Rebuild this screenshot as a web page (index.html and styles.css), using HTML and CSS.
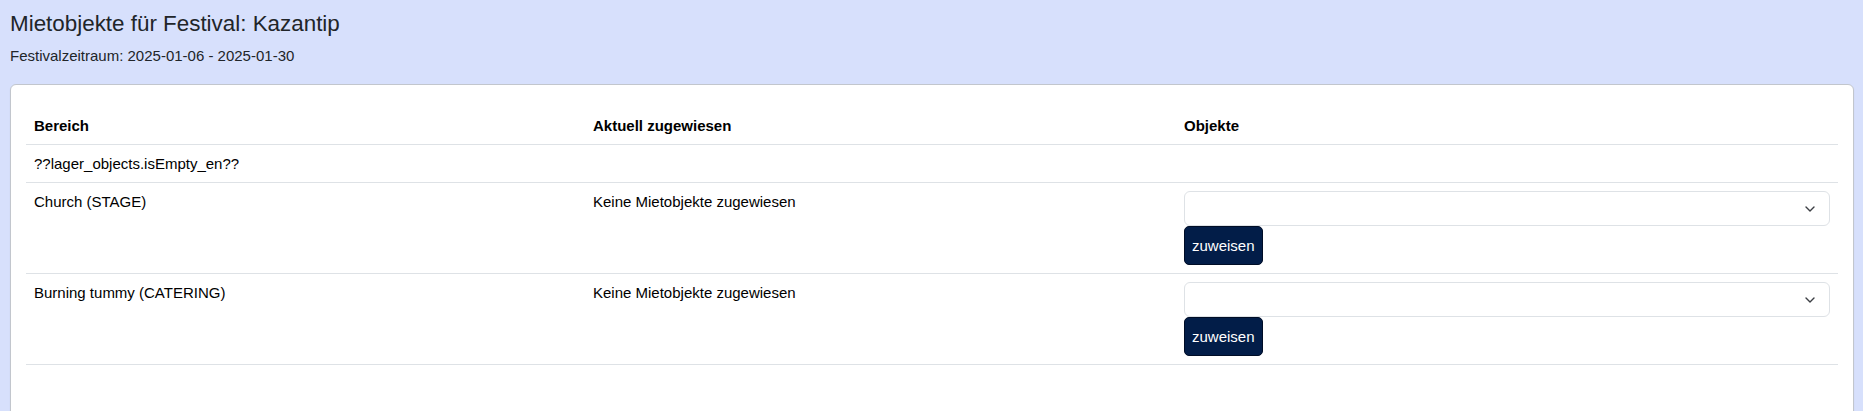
FILE: index.html
```html
<!DOCTYPE html>
<html lang="de">
<head>
<meta charset="utf-8">
<title>Mietobjekte für Festival: Kazantip</title>
<link rel="stylesheet" href="styles.css">
</head>
<body class="page">
  <header class="page-head">
    <h1 class="title">Mietobjekte für Festival: Kazantip</h1>
    <p class="period">Festivalzeitraum: 2025-01-06 - 2025-01-30</p>
  </header>
  <section class="card">
    <table class="tbl">
      <colgroup>
        <col class="col-area">
        <col class="col-current">
        <col class="col-objects">
      </colgroup>
      <thead>
        <tr>
          <th>Bereich</th>
          <th>Aktuell zugewiesen</th>
          <th>Objekte</th>
        </tr>
      </thead>
      <tbody>
        <tr>
          <td colspan="3">??lager_objects.isEmpty_en??</td>
        </tr>
        <tr>
          <td>Church (STAGE)</td>
          <td>Keine Mietobjekte zugewiesen</td>
          <td>
            <form class="assign">
              <div class="select">
                <span class="select-value"></span>
                <svg class="chev" viewBox="0 0 10 6" width="10" height="6"><path d="M1 1l4 4 4-4" fill="none" stroke="#3c3f44" stroke-width="1.4" stroke-linecap="round" stroke-linejoin="round"/></svg>
              </div>
              <button type="button" class="btn">zuweisen</button>
            </form>
          </td>
        </tr>
        <tr>
          <td>Burning tummy (CATERING)</td>
          <td>Keine Mietobjekte zugewiesen</td>
          <td>
            <form class="assign">
              <div class="select">
                <span class="select-value"></span>
                <svg class="chev" viewBox="0 0 10 6" width="10" height="6"><path d="M1 1l4 4 4-4" fill="none" stroke="#3c3f44" stroke-width="1.4" stroke-linecap="round" stroke-linejoin="round"/></svg>
              </div>
              <button type="button" class="btn">zuweisen</button>
            </form>
          </td>
        </tr>
      </tbody>
    </table>
  </section>
</body>
</html>
```
FILE: styles.css
```css
* { box-sizing: border-box; }

html, body { height: 100%; }

.page {
  margin: 0;
  padding: 0 9px 0 10px;
  background: #d7e0fc;
  font-family: "Liberation Sans", Arial, sans-serif;
  color: #000;
  overflow: hidden;
}

.page-head { padding-top: 11px; }

.title {
  margin: 0;
  font-size: 22.4px;
  line-height: 1.2;
  font-weight: 400;
  color: #212529;
}

.period {
  margin: 7px 0 0;
  font-size: 15px;
  line-height: 21px;
  color: #212529;
}

.card {
  margin-top: 18px;
  background: #fff;
  border: 1px solid #c2c6cd;
  border-radius: 6px;
  padding: 22px 15px 80px;
  box-shadow: 0 1px 2px rgba(0,0,0,0.06);
}

.tbl {
  width: 100%;
  border-collapse: collapse;
  table-layout: fixed;
  font-size: 15px;
  line-height: 21px;
}

.col-area { width: 559px; }
.col-current { width: 591px; }

.tbl th,
.tbl td {
  padding: 8px;
  text-align: left;
  vertical-align: top;
  border-bottom: 1px solid #dee2e6;
}

.tbl th { font-weight: 700; }

.assign {
  display: flex;
  flex-direction: column;
  align-items: flex-start;
  margin: 0;
}

.select {
  width: 100%;
  height: 35px;
  border: 1px solid #dee2e6;
  border-radius: 6px;
  display: flex;
  align-items: center;
  justify-content: space-between;
  padding: 1px 14px 0 12px;
  background: #fff;
}

.chev { display: block; }

.btn {
  height: 39px;
  padding: 0 7px;
  border: 1px solid #000d26;
  border-radius: 5px;
  background: #021d48;
  color: #fff;
  font-family: "Liberation Sans", Arial, sans-serif;
  font-size: 15px;
  line-height: 21px;
  cursor: pointer;
}
```
